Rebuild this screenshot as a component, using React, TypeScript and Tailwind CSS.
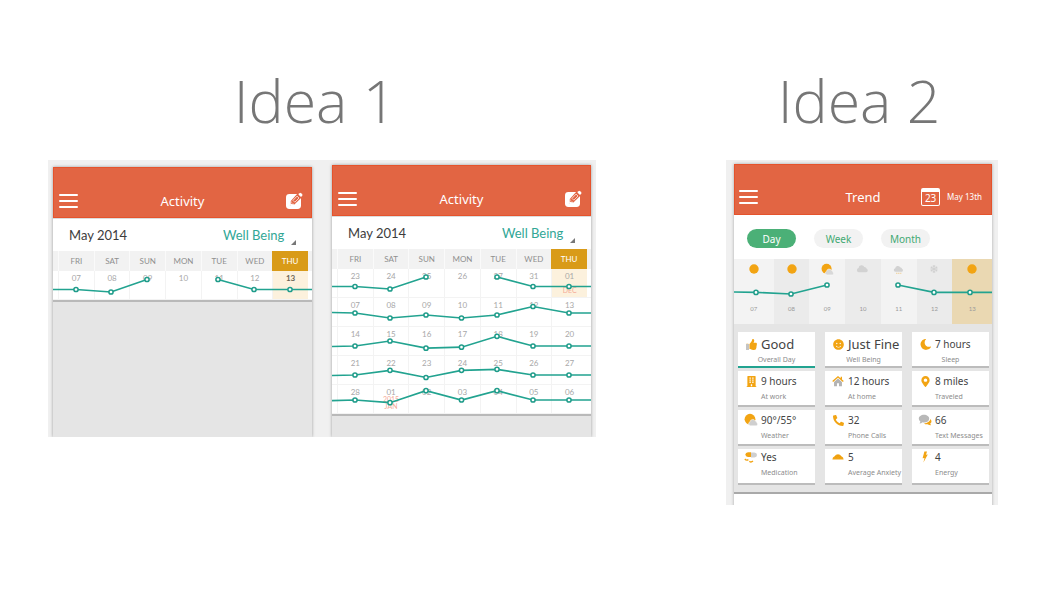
import type { ReactNode } from "react";
import {
  FaThumbsUp,
  FaSmile,
  FaMoon,
  FaBuilding,
  FaMapMarkerAlt,
  FaPhone,
  FaSnowflake,
} from "react-icons/fa";

type Point = [number, number];

const lato = "font-['Lato',sans-serif]";
const noto = "font-['Noto_Sans',sans-serif]";

function LineChart({ width, height, lines }: { width: number; height: number; lines: Point[][] }) {
  return (
    <svg
      className="pointer-events-none absolute inset-0 h-full w-full"
      viewBox={`0 0 ${width} ${height}`}
      preserveAspectRatio="none"
      aria-hidden="true"
    >
      {lines.map((pts, i) => (
        <polyline
          key={i}
          points={pts.map((p) => p.join(",")).join(" ")}
          fill="none"
          stroke="#22a390"
          strokeWidth="1.7"
        />
      ))}
      {lines.map((pts, i) =>
        pts
          .filter((p) => p[0] > 0 && p[0] < width)
          .map((p, j) => (
            <circle key={`${i}-${j}`} cx={p[0]} cy={p[1]} r="2.1" fill="#fff" stroke="#1f9c8a" strokeWidth="1.5" />
          )),
      )}
    </svg>
  );
}

function MenuButton() {
  return (
    <button type="button" aria-label="Menu" className="flex w-[19px] flex-col gap-[4px]">
      <span className="h-[2px] w-full rounded-full bg-white" />
      <span className="h-[2px] w-full rounded-full bg-white" />
      <span className="h-[2px] w-full rounded-full bg-white" />
    </button>
  );
}

function EditIcon() {
  return (
    <svg width="18" height="18" viewBox="0 0 18 18" aria-hidden="true">
      <rect x="1" y="2" width="15" height="15" rx="3.4" fill="#fff" />
      <path d="M4.9 13.2 5.8 9 13.4 .6 17.6 4.4 9.4 12.6Z" fill="#e26543" />
      <path d="M4.9 13.2 5.8 9 9.4 12.6Z" fill="#fff" />
      <path d="M6 12.1 6.7 9.4 8.8 11.4Z" fill="#e26543" />
      <path d="M8 8.4 12 4.1 14 6 9.8 10.2Z" fill="none" stroke="#fff" strokeWidth=".7" />
      <path d="M13.4 2.4 14.5 1.2Q15.3.5 16.1 1.2L17.2 2.3Q17.8 3.1 17.2 3.8L16 5Z" fill="#fff" />
    </svg>
  );
}

const days = ["FRI", "SAT", "SUN", "MON", "TUE", "WED", "THU"];

function Calendar({
  rows,
  notes = {},
  lines,
  height,
  highlightBold = false,
}: {
  rows: string[][];
  notes?: Record<string, string[]>;
  lines: Point[][];
  height: number;
  highlightBold?: boolean;
}) {
  return (
    <div className="border-b-2 border-[#b9b9b9]">
      <div className="relative">
        <table
          className={`w-full table-fixed border-separate border-spacing-0 bg-white text-[8px] leading-[10px] ${lato}`}
        >
          <colgroup>
            <col className="w-[5px]" />
            {days.map((d) => (
              <col key={d} />
            ))}
            <col className="w-[4px]" />
          </colgroup>
          <thead>
            <tr className="h-[20px] bg-[#f2f2f2] text-[#8f8f8f]">
              <td />
              {days.map((d, i) => (
                <th
                  key={d}
                  scope="col"
                  className={
                    i === 6
                      ? "bg-[#d99b18] p-0 font-normal text-white"
                      : "border-l border-[#fafafa] p-0 font-normal"
                  }
                >
                  {d}
                </th>
              ))}
              <td />
            </tr>
          </thead>
          <tbody>
            {rows.map((row, r) => (
              <tr key={r} className="h-[29px]">
                <td className="border-b border-[#f3f3f3] p-0" />
                {row.map((d, c) => {
                  const hot = r === 0 && c === 6;
                  return (
                    <td
                      key={c}
                      className={`border-b border-l border-[#f3f3f3] p-0 pt-[2px] text-center align-top ${
                        hot ? "bg-[#fcf1dd]" : ""
                      } ${hot && highlightBold ? "font-bold text-[#6b6456]" : "text-[#a8a8a8]"}`}
                    >
                      <div className="relative">
                        {d}
                        {notes[`${r}-${c}`] && (
                          <span
                            className={`absolute inset-x-0 flex flex-col text-[7px] leading-[7px] text-[#f5ab98] ${
                              hot ? "top-[16px]" : "top-[9px]"
                            }`}
                          >
                            {notes[`${r}-${c}`].map((n) => (
                              <span key={n}>{n}</span>
                            ))}
                          </span>
                        )}
                      </div>
                    </td>
                  );
                })}
                <td className="border-b border-[#f3f3f3] p-0" />
              </tr>
            ))}
          </tbody>
        </table>
        <LineChart width={259} height={height} lines={lines} />
      </div>
    </div>
  );
}

function ActivityPhone({ id, children }: { id: string; children: ReactNode }) {
  return (
    <article className="flex min-w-0 flex-1 flex-col bg-[#e5e5e5] shadow-[0_0_3px_rgba(0,0,0,0.35)]">
      <header className="grid h-[51px] grid-cols-[1fr_auto_1fr] items-center border border-[#e5532c] bg-[#e26543] px-[5px] pt-[16px]">
        <MenuButton />
        <h2 className={`text-[13px] leading-[16px] text-white ${noto}`}>Activity</h2>
        <button type="button" aria-label="Edit" className="mr-[3px] justify-self-end">
          <EditIcon />
        </button>
      </header>
      <div
        className={`flex h-[33px] items-center border-t border-[#dcdcdc] bg-white pr-[16px] pl-[16px] text-[13px] leading-[16px] ${lato}`}
      >
        <h3 className="flex-1 text-[#3c3c3c]">May 2014</h3>
        <select
          id={id}
          aria-label="Measure"
          className="w-[62px] appearance-none bg-transparent text-[13px] leading-[16px] text-[#31a796]"
        >
          <option>Well Being</option>
        </select>
        <svg width="5" height="5" viewBox="0 0 5 5" className="mb-[6px] ml-[6px] self-end" aria-hidden="true">
          <path d="M5 0V5H0Z" fill="#777" />
        </svg>
      </div>
      {children}
    </article>
  );
}

const weekLine = (a: number, b: number, c: number): Point[][] => [
  [[0, a], [23, a], [58, b], [94, c]],
  [[165, c], [201, a], [237, a], [259, a]],
];

const fullLine = (start: number, ys: number[]): Point[] => [
  [0, start],
  ...ys.map((y, i) => [[23, 58, 94, 129.5, 165, 201, 237][i], y] as Point),
  [259, ys[6]],
];

const calendarLines: Point[][] = [
  ...weekLine(37.5, 40, 28),
  fullLine(63.5, [64, 69, 66, 69, 66, 57.5, 64]),
  fullLine(97.5, [97, 92, 99.2, 98.2, 87.3, 97, 97]),
  fullLine(126.5, [126, 121.3, 128.5, 121.3, 120.3, 126, 126]),
  fullLine(151.7, [151, 153.7, 141.7, 151, 141.7, 151, 151]),
];

function Sun() {
  return (
    <svg width="12" height="12" viewBox="0 0 12 12" aria-hidden="true">
      <circle cx="6" cy="6" r="4.7" fill="#f2a413" />
    </svg>
  );
}

const cloudPath =
  "M3 10A2.4 2.4 0 0 1 2.8 5.3 3.3 3.3 0 0 1 9 4.2 2.6 2.6 0 0 1 11.5 6.2 2 2 0 0 1 11 10Z";

function Cloud({ rain = false }: { rain?: boolean }) {
  return (
    <svg width={rain ? 11 : 13} height={rain ? 11 : 13} viewBox="0 0 14 14" aria-hidden="true">
      <path d={cloudPath} fill="#d2d2d2" />
      {rain && <path d="M4 11.8h1.6M6.6 11.8h1.6M9.2 11.8h1.4" stroke="#efc780" strokeWidth="1.2" />}
    </svg>
  );
}

function SunCloud({ size, color }: { size: number; color: string }) {
  return (
    <svg width={size} height={size} viewBox="0 0 14 14" aria-hidden="true">
      <circle cx="6" cy="6.2" r="5.4" fill="#f2a413" />
      <path
        d="M6.5 12.8A2 2 0 0 1 6 8.9 2.8 2.8 0 0 1 11.3 8 2.1 2.1 0 0 1 13 10 1.6 1.6 0 0 1 12.4 12.8Z"
        fill={color}
        stroke="#fff"
        strokeWidth=".5"
      />
    </svg>
  );
}

function HomeIcon() {
  return (
    <svg width="12" height="12" viewBox="0 0 14 14" aria-hidden="true">
      <path d="M2.4 8.3 7 4.2 11.6 8.3V13H8.2V9.6H5.8V13H2.4Z" fill="#b3b3b3" />
      <path d="M.8 7.6 7 2.1 13.2 7.6M10.9 2V5" fill="none" stroke="#f2a413" strokeWidth="1.6" />
    </svg>
  );
}

function ThumbIcon() {
  return (
    <span className="relative flex">
      <FaThumbsUp size={11} color="#f2a413" />
      <span className="absolute bottom-0 left-0 h-[6px] w-[3px] bg-[#c4c4c4]" />
    </span>
  );
}

function PillIcon() {
  return (
    <svg width="14" height="12" viewBox="0 0 14 12" aria-hidden="true">
      <path d="M7 1.2H4Q1.4 1.4 1.4 3.6T4 6H7Z" fill="#f2a413" />
      <path d="M7 1.6H10.4Q13 1.8 13 4T10.4 6.4H7Z" fill="#cfcfcf" />
      <path d="M.8 8Q2.4 9.8 4.4 8.6M5.4 10.2Q7 11.8 9 10" fill="none" stroke="#f2a413" strokeWidth="1.3" />
    </svg>
  );
}

function AnxietyIcon() {
  return (
    <svg width="12" height="8" viewBox="0 0 12 8" aria-hidden="true">
      <path d="M.4 6.6Q.4 4 2.6 3.2 3.8 1.3 6 1.3T9.4 3.2Q11.6 4 11.6 6.6Z" fill="#f2a413" />
      <path d="M3.4 3.4 4.4 4.6M6 2.2V3.6M8.6 3.4 7.6 4.6" stroke="#dd9000" strokeWidth=".6" />
    </svg>
  );
}

function ChatIcon() {
  return (
    <svg width="14" height="12" viewBox="0 0 14 12" aria-hidden="true">
      <path d="M12.5 5Q14.6 8 12.2 9.6L13 11.3Q10.8 11.2 9.6 10.3 7.4 10.6 6 9.4 11.4 9 12.5 5Z" fill="#f2a413" />
      <path
        d="M6 .8C9 .8 11.2 2.5 11.2 4.7S9 8.4 6 8.4Q5.2 8.4 4.5 8.2 3.2 9.5 1.6 9.5L2.4 7.4Q.8 6.4.8 4.7C.8 2.5 3 .8 6 .8Z"
        fill="#b8b8b8"
      />
    </svg>
  );
}

function BoltIcon() {
  return (
    <svg width="8" height="12" viewBox="0 0 8 12" aria-hidden="true">
      <path d="M3.4.6H6L5 3.8 6.8 3.6 2.4 11.6 3.5 7 1.6 7.2Z" fill="#f2a413" />
    </svg>
  );
}

interface Stat {
  value: string;
  label: string;
  icon: ReactNode;
  big?: boolean;
  active?: boolean;
}

const stats: Stat[] = [
  { value: "Good", label: "Overall Day", icon: <ThumbIcon />, big: true, active: true },
  { value: "Just Fine", label: "Well Being", icon: <FaSmile size={11} color="#f2a413" />, big: true },
  { value: "7 hours", label: "Sleep", icon: <FaMoon size={11} color="#f2a413" className="-rotate-12" /> },
  { value: "9 hours", label: "At work", icon: <FaBuilding size={11} color="#f2a413" /> },
  { value: "12 hours", label: "At home", icon: <HomeIcon /> },
  { value: "8 miles", label: "Traveled", icon: <FaMapMarkerAlt size={11} color="#f2a413" /> },
  { value: "90°/55°", label: "Weather", icon: <SunCloud size={14} color="#cfcfcf" /> },
  { value: "32", label: "Phone Calls", icon: <FaPhone size={11} color="#f2a413" className="-scale-x-100" /> },
  { value: "66", label: "Text Messages", icon: <ChatIcon /> },
  { value: "Yes", label: "Medication", icon: <PillIcon /> },
  { value: "5", label: "Average Anxiety", icon: <AnxietyIcon /> },
  { value: "4", label: "Energy", icon: <BoltIcon /> },
];

const rowPadding = ["pt-[4px]", "pt-[2px]", "pt-[2px]", "pt-0"];

const forecast: { day: string; icon: ReactNode }[] = [
  { day: "07", icon: <Sun /> },
  { day: "08", icon: <Sun /> },
  { day: "09", icon: <SunCloud size={13} color="#d8d8d8" /> },
  { day: "10", icon: <Cloud /> },
  { day: "11", icon: <Cloud rain /> },
  { day: "12", icon: <FaSnowflake size={8} color="#d0d0d0" /> },
  { day: "13", icon: <Sun /> },
];

function TrendPhone() {
  return (
    <article className={`flex flex-col bg-white shadow-[0_0_3px_rgba(0,0,0,0.3)] ${noto}`}>
      <header className="grid h-[51px] grid-cols-[1fr_auto_1fr] items-center border border-[#e5532c] bg-[#e26543] px-[4px] pt-[15px] text-white">
        <MenuButton />
        <h2 className="text-[13px] leading-[16px]">Trend</h2>
        <div className="mr-[5px] flex items-center gap-[7px] justify-self-end">
          <button
            type="button"
            className="h-[18px] w-[19px] rounded-[2px] border border-t-4 border-white text-center text-[10px] leading-[13px]"
          >
            23
          </button>
          <time className="text-[8px] leading-[10px]">May 13th</time>
        </div>
      </header>
      <nav className="flex h-[44px] items-center gap-[18px] px-[13px] pt-[3px] text-[10px] leading-[12px]">
        <button type="button" className="h-[19px] w-[49px] rounded-full bg-[#4bb077] text-white">
          Day
        </button>
        <button type="button" className="h-[19px] w-[49px] rounded-full bg-[#f2f2f2] text-[#43a972]">
          Week
        </button>
        <button type="button" className="h-[19px] w-[49px] rounded-full bg-[#f2f2f2] text-[#43a972]">
          Month
        </button>
      </nav>
      <div className="relative">
        <ol
          className={`grid h-[65px] grid-cols-[40fr_36fr_36fr_36fr_36fr_36fr_40fr] text-[6px] leading-[8px] text-[#9a9a9a] ${lato}`}
        >
          {forecast.map((f, i) => (
            <li
              key={f.day}
              className={`flex flex-col items-center justify-between pt-[4px] pb-[11px] ${
                i === 6 ? "bg-[#ead8b2]" : i % 2 ? "bg-[#ebebeb]" : "bg-[#f3f3f3]"
              }`}
            >
              <span className="flex h-[12px] items-center">{f.icon}</span>
              <span>{f.day}</span>
            </li>
          ))}
        </ol>
        <LineChart
          width={258}
          height={65}
          lines={[
            [[0, 33], [22, 33.4], [57, 35], [93, 26]],
            [[164, 26], [200, 33.4], [236, 33.4], [258, 33.4]],
          ]}
        />
      </div>
      <ul className="grid grid-cols-3 gap-x-[10px] gap-y-[3px] border-b-2 border-[#a9a9a9] bg-[#e5e5e5] pt-[8px] pr-[3px] pb-[7px] pl-[4px]">
        {stats.map((s, i) => (
          <li
            key={s.label}
            className={`grid h-[36px] grid-cols-[14px_1fr] content-start gap-x-[3px] border-b-2 bg-white pl-[6px] whitespace-nowrap ${
              s.active ? "border-[#22a390]" : "border-[#bcbcbc]"
            } ${rowPadding[Math.floor(i / 3)]}`}
          >
            <span className="flex h-[16px] items-center justify-center">{s.icon}</span>
            <span className={`text-[#444] ${s.big ? "text-[13px] leading-[16px]" : "text-[10px] leading-[16px]"}`}>
              {s.value}
            </span>
            <span
              className={`mt-[4px] text-[7px] leading-[8px] text-[#8c8c8c] ${
                i < 3 ? "col-span-2 pr-[6px] text-center" : "col-start-2"
              }`}
            >
              {s.label}
            </span>
          </li>
        ))}
      </ul>
      <div className="h-[20px] bg-white" />
    </article>
  );
}

export default function App() {
  return (
    <main className="grid min-h-screen grid-cols-[548fr_272fr] items-start gap-x-[130px] bg-white pt-[60px] pr-[46px] pb-10 pl-[48px]">
      <section>
        <h1 className="h-[100px] pr-[14px] text-center font-['Open_Sans',sans-serif] text-[59px] leading-[80px] font-light text-[#767676]">
          Idea 1
        </h1>
        <div className="flex h-[277px] items-stretch gap-[20px] overflow-hidden bg-[#f0f0f0] px-[5px]">
          <div className="flex min-w-0 flex-1 pt-[7px]">
            <ActivityPhone id="measure-week">
              <Calendar
                rows={[["07", "08", "09", "10", "11", "12", "13"]]}
                lines={weekLine(38.5, 41, 28.5)}
                height={49}
                highlightBold
              />
            </ActivityPhone>
          </div>
          <div className="flex min-w-0 flex-1 pt-[5px]">
            <ActivityPhone id="measure-month">
              <Calendar
                rows={[
                  ["23", "24", "25", "26", "27", "31", "01"],
                  ["07", "08", "09", "10", "11", "12", "13"],
                  ["14", "15", "16", "17", "18", "19", "20"],
                  ["21", "22", "23", "24", "25", "26", "27"],
                  ["28", "01", "02", "03", "04", "05", "06"],
                ]}
                notes={{ "0-6": ["DEC"], "4-1": ["2015", "JAN"] }}
                lines={calendarLines}
                height={165}
              />
            </ActivityPhone>
          </div>
        </div>
      </section>
      <section>
        <h1 className="h-[100px] pr-[6px] text-center font-['Open_Sans',sans-serif] text-[59px] leading-[80px] font-light text-[#767676]">
          Idea 2
        </h1>
        <div className="h-[345px] overflow-hidden bg-[#f0f0f0] pt-[4px] pr-[6px] pl-[8px]">
          <TrendPhone />
        </div>
      </section>
    </main>
  );
}
